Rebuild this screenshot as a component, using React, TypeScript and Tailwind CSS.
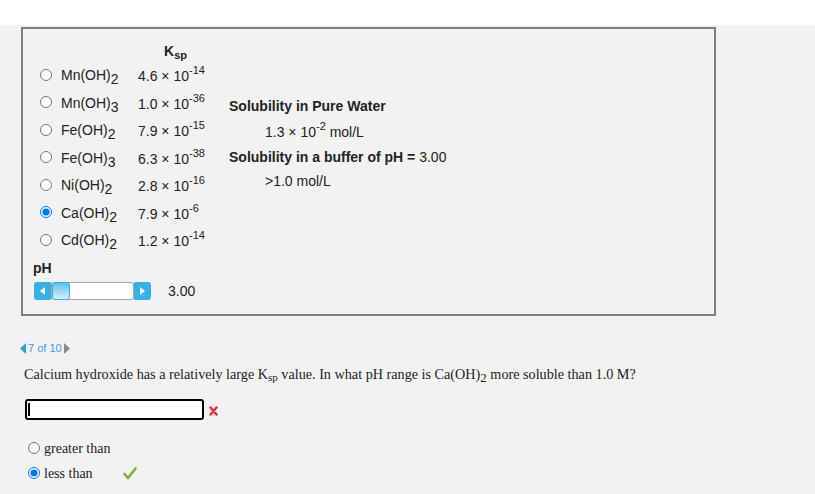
import React from "react"

const rows = [
  { base: "Mn(OH)", sub: "2", k: "4.6", exp: "-14" },
  { base: "Mn(OH)", sub: "3", k: "1.0", exp: "-36" },
  { base: "Fe(OH)", sub: "2", k: "7.9", exp: "-15" },
  { base: "Fe(OH)", sub: "3", k: "6.3", exp: "-38" },
  { base: "Ni(OH)", sub: "2", k: "2.8", exp: "-16" },
  { base: "Ca(OH)", sub: "2", k: "7.9", exp: "-6", checked: true },
  { base: "Cd(OH)", sub: "2", k: "1.2", exp: "-14" },
]

function Radio({ checked }: { checked?: boolean }) {
  return (
    <input
      type="radio"
      checked={!!checked}
      readOnly
      className="m-0 w-[12px] h-[12px] shrink-0"
    />
  )
}

function Sci({ k, exp }: { k: string; exp: string }) {
  return (
    <span>
      {k} × 10<sup className="text-[11px] -top-[7px]">{exp}</sup>
    </span>
  )
}

export default function App() {
  return (
    <div className="min-h-screen bg-white" style={{ fontFamily: '"Liberation Sans", Arial, sans-serif' }}>
      <div className="h-[25px] bg-white" />
      <div className="bg-[#f2f2f2] min-h-[469px] pt-[2px] text-[#222]">
        {/* simulation panel */}
        <div className="ml-[21px] w-[695px] h-[289px] border-2 border-[#7f7f7f] flex">
          <div className="pl-[17px] pt-[12px] w-[206px] shrink-0">
            <div className="h-[20px] pl-[124px] font-bold text-[14px] leading-[20px]">
              K<sub className="text-[11px]">sp</sub>
            </div>
            {rows.map((r, i) => (
              <div key={i} className="h-[27.5px] flex items-center text-[14px]">
                <Radio checked={r.checked} />
                <span className="ml-[9px] w-[78px] relative top-[1px]">
                  {r.base}
                  <span className="relative top-[4px]">{r.sub}</span>
                </span>
                <span className="relative top-[2px] -ml-[1px]">
                  <Sci k={r.k} exp={r.exp} />
                </span>
              </div>
            ))}
            <div className="mt-[6px] font-bold text-[14px] leading-[16px] -ml-[7px]">pH</div>
            <div className="mt-[5px] -ml-[6px] flex items-center">
              <div className="w-[18px] h-[18px] rounded-[3px] bg-[#38b0e3] flex items-center justify-center">
                <svg width="6" height="8" viewBox="0 0 6 8"><path d="M5 0 L0 4 L5 8 Z" fill="#fff" /></svg>
              </div>
              <div className="relative w-[83px] h-[18px] bg-white border border-[#aaa] rounded-[3px] -ml-[1px]">
                <div className="absolute left-0 -top-[1px] w-[18px] h-[18px] rounded-[3px] border border-[#38b0e3] bg-gradient-to-b from-[#5cbfea] to-[#d6effb]" />
              </div>
              <div className="w-[18px] h-[18px] rounded-[3px] bg-[#38b0e3] flex items-center justify-center -ml-[1px]">
                <svg width="6" height="8" viewBox="0 0 6 8"><path d="M1 0 L6 4 L1 8 Z" fill="#fff" /></svg>
              </div>
              <span className="ml-[17px] text-[14px]">3.00</span>
            </div>
          </div>
          <div className="pt-[67px] text-[14px]">
            <div className="h-[26px] font-bold">Solubility in Pure Water</div>
            <div className="h-[25px] pl-[36px]">
              1.3 × 10<sup className="text-[11px] -top-[7px]">-2</sup> mol/L
            </div>
            <div className="h-[24px]">
              <span className="font-bold">Solubility in a buffer of pH = </span>3.00
            </div>
            <div className="pl-[36px]">&gt;1.0 mol/L</div>
          </div>
        </div>

        {/* question */}
        <div className="pl-[20px] mt-[24px]" style={{ fontFamily: '"Liberation Serif", "Times New Roman", serif' }}>
          <div className="flex items-center gap-[2px] text-[11px] text-[#3a9ad9]" style={{ fontFamily: '"Liberation Sans", Arial, sans-serif' }}>
            <svg width="6" height="11" viewBox="0 0 6 11"><path d="M6 0 L0 5.5 L6 11 Z" fill="#3a9ad9" /></svg>
            <span>7 of 10</span>
            <svg width="6" height="11" viewBox="0 0 6 11"><path d="M0 0 L6 5.5 L0 11 Z" fill="#888" /></svg>
          </div>
          <div className="mt-[7px] pl-[4px] text-[14.2px] text-[#222]">
            Calcium hydroxide has a relatively large K<sub className="text-[11px]">sp</sub> value. In what pH range is Ca(OH)
            <sub className="text-[13px]">2</sub> more soluble than 1.0 M?
          </div>
          <div className="mt-[14px] pl-[5px] flex items-center">
            <div className="w-[179px] h-[21px] border-2 border-black rounded-[3px] bg-white flex items-center pl-[1px]">
              <div className="w-[2px] h-[13px] bg-black" />
            </div>
            <svg className="ml-[5px] mt-[3px]" width="9" height="10" viewBox="0 0 9 10">
              <path d="M1.5 1.5 L7.5 8.5 M7.5 1.5 L1.5 8.5" stroke="#e8262b" strokeWidth="2.4" strokeLinecap="round" />
            </svg>
          </div>
          <div className="mt-[16px] pl-[8px] flex items-center h-[25px] text-[14px]">
            <Radio />
            <span className="ml-[4px]">greater than</span>
          </div>
          <div className="pl-[8px] flex items-center h-[25px] text-[14px]">
            <Radio checked />
            <span className="ml-[4px]">less than</span>
            <svg className="ml-[30px]" width="14" height="13" viewBox="0 0 14 13">
              <path d="M1.5 7 L5 11 L12.5 1.5" stroke="#7bb33a" strokeWidth="2.6" fill="none" strokeLinecap="round" strokeLinejoin="round" />
            </svg>
          </div>
        </div>
      </div>
    </div>
  )
}
